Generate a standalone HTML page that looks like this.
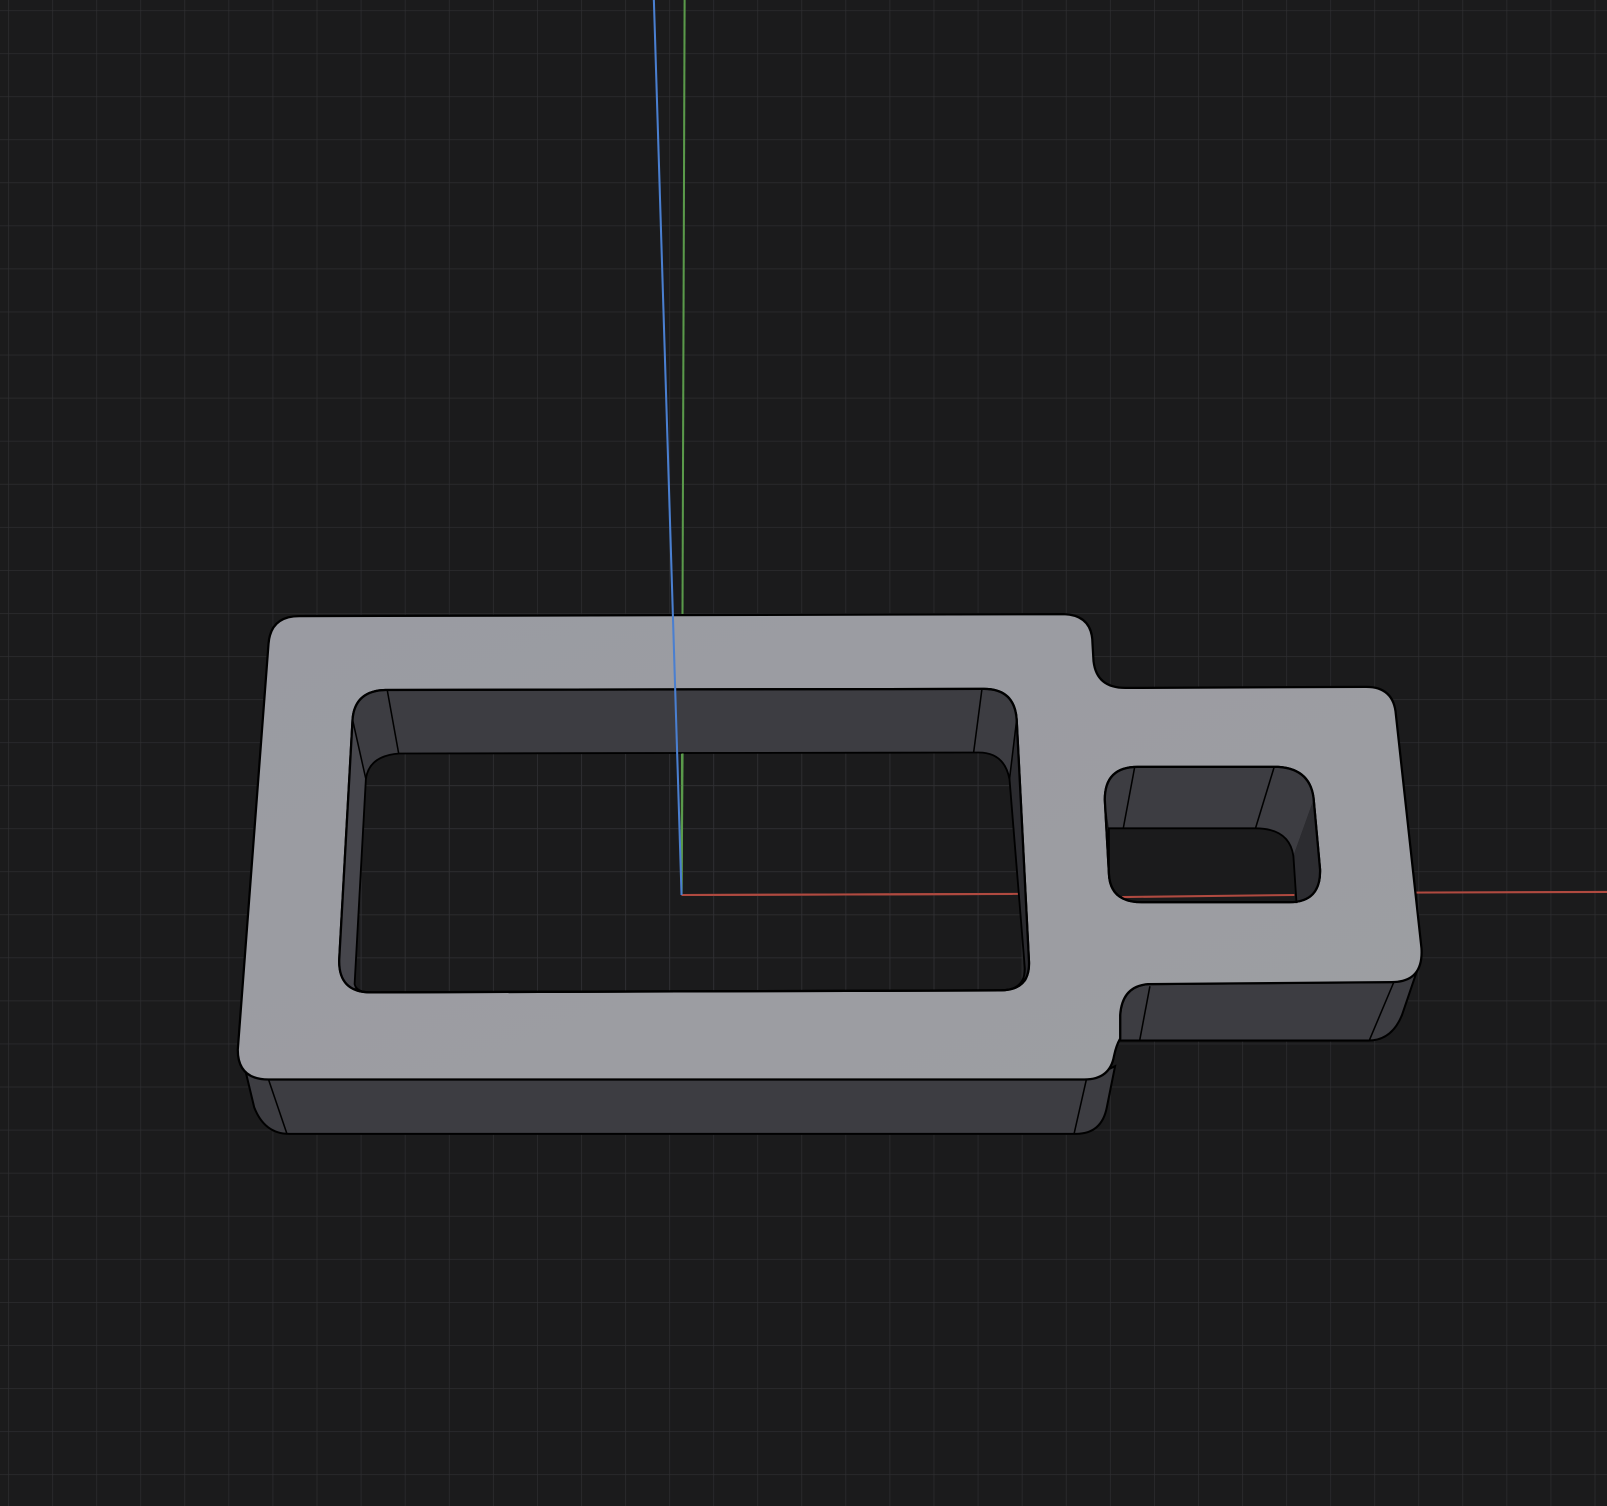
<!DOCTYPE html>
<html><head><meta charset="utf-8"><style>
html,body{margin:0;padding:0;background:#1b1b1c;width:1607px;height:1506px;overflow:hidden}
svg{display:block}
</style></head><body>
<svg width="1607" height="1506" viewBox="0 0 1568 1469" preserveAspectRatio="none" xmlns="http://www.w3.org/2000/svg">
<defs>
<pattern id="g" x="8" y="10" width="43" height="42" patternUnits="userSpaceOnUse">
<path d="M0 0H43M0 0V42" stroke="#303033" stroke-width="1.2" fill="none"/>
</pattern>
<linearGradient id="face" x1="0" y1="0" x2="1" y2="1">
<stop offset="0" stop-color="#9a9ba2"/><stop offset="1" stop-color="#9d9ea2"/>
</linearGradient>
</defs>
<rect width="1568" height="1469" fill="#1b1b1c"/>
<rect width="1568" height="1469" fill="url(#g)"/>
<line x1="668" y1="0" x2="665" y2="873" stroke="#5a9a4a" stroke-width="2"/>
<line x1="665" y1="873" x2="1568" y2="870" stroke="#b04a40" stroke-width="2"/>
<path d="M236 1030 L248 1080 Q258 1106 282 1106 L1050 1106 Q1075 1106 1080 1080 L1088 1040 L1060 1053 Z" fill="#3d3d42" stroke="#000" stroke-width="2"/>
<path d="M1120 960 Q1095 962 1093 990 L1093 1015 L1335 1015 Q1358 1015 1368 990 L1385 940 L1360 958 Z" fill="#3d3d42" stroke="#000" stroke-width="2"/>
<line x1="262" y1="1053" x2="280" y2="1106" stroke="#000" stroke-width="1.5"/>
<line x1="1060" y1="1053" x2="1048" y2="1106" stroke="#000" stroke-width="1.5"/>
<line x1="1122" y1="962" x2="1112" y2="1015" stroke="#000" stroke-width="1.5"/>
<line x1="1360" y1="958" x2="1336" y2="1015" stroke="#000" stroke-width="1.5"/>
<path fill-rule="evenodd" fill="url(#face)" stroke="#000" stroke-width="2.2" d="
M292 601 L1038 599 Q1066 600 1066 628 L1067 645 Q1070 671 1098 671 L1333 670 Q1360 670 1362 697 L1387 925 Q1389 958 1358 958 L1120 960 Q1095 962 1093 990 L1093 1013 Q1089 1020 1087 1030 Q1083 1053 1058 1053 L262 1053 Q232 1053 232 1024 L262 628 Q264 601 292 601 Z
M376 673 L960 672 Q990 672 992 702 L1004 938 Q1005 966 976 966 L362 968 Q330 968 331 936 L344 702 Q346 674 376 673 Z
M1110 748 L1247 748 Q1280 750 1282 782 L1288 848 Q1289 880 1258 880 L1114 880 Q1083 880 1082 852 L1078 780 Q1078 748 1110 748 Z"/>
<path d="M376 674 L960 673 Q990 673 992 702 L990 735 L985 760 Q980 734 955 734 L390 735 Q360 737 357 760 L344 702 Q346 675 376 674 Z" fill="#3d3d42"/>
<path d="M344 702 L357 760 L346 966 Q331 960 331 936 Z" fill="#46464c"/>
<path d="M992 702 L1004 938 Q1004 955 1000 958 L985 760 Z" fill="#2a2a2e"/>
<path d="M357 760 Q360 737 390 735 L955 734 Q980 734 985 760 L1000 945 Q1000 966 976 966 L362 968 Q348 968 346 960 Z" fill="url(#g)" stroke="#000" stroke-width="1.8"/>
<path d="M376 673 L960 672 Q990 672 992 702 L1004 938 Q1005 966 976 966 L362 968 Q330 968 331 936 L344 702 Q346 674 376 673 Z" fill="none" stroke="#000" stroke-width="2.2"/>
<line x1="378" y1="674" x2="389" y2="735" stroke="#000" stroke-width="1.5"/>
<line x1="958" y1="673" x2="950" y2="734" stroke="#000" stroke-width="1.5"/>
<line x1="344" y1="702" x2="357" y2="760" stroke="#000" stroke-width="1.5"/>
<line x1="992" y1="702" x2="985" y2="760" stroke="#000" stroke-width="1.5"/>
<path d="M1110 749 L1247 749 Q1280 751 1281 782 L1262 835 Q1258 808 1225 808 L1082 808 L1078 780 Q1078 749 1110 749 Z" fill="#3d3d42"/>
<path d="M1281 782 L1288 848 Q1288 875 1265 880 L1262 835 Z" fill="#2c2c30"/>
<path d="M1082 808 L1225 808 Q1258 808 1262 835 L1265 880 L1114 880 Q1083 880 1082 852 Z" fill="#1b1b1c" stroke="#000" stroke-width="1.8"/>
<line x1="1095" y1="875" x2="1263" y2="873" stroke="#b04a40" stroke-width="2"/>
<path d="M1110 748 L1247 748 Q1280 750 1282 782 L1288 848 Q1289 880 1258 880 L1114 880 Q1083 880 1082 852 L1078 780 Q1078 748 1110 748 Z" fill="none" stroke="#000" stroke-width="2.2"/>
<line x1="1107" y1="749" x2="1096" y2="808" stroke="#000" stroke-width="1.5"/>
<line x1="1243" y1="749" x2="1225" y2="808" stroke="#000" stroke-width="1.5"/>
<line x1="666" y1="735" x2="665" y2="873" stroke="#5a9a4a" stroke-width="2"/>
<line x1="665" y1="873" x2="988" y2="872" stroke="#b04a40" stroke-width="2"/>
<line x1="638" y1="0" x2="665" y2="873" stroke="#4a7fd0" stroke-width="2"/>
</svg>
</body></html>
